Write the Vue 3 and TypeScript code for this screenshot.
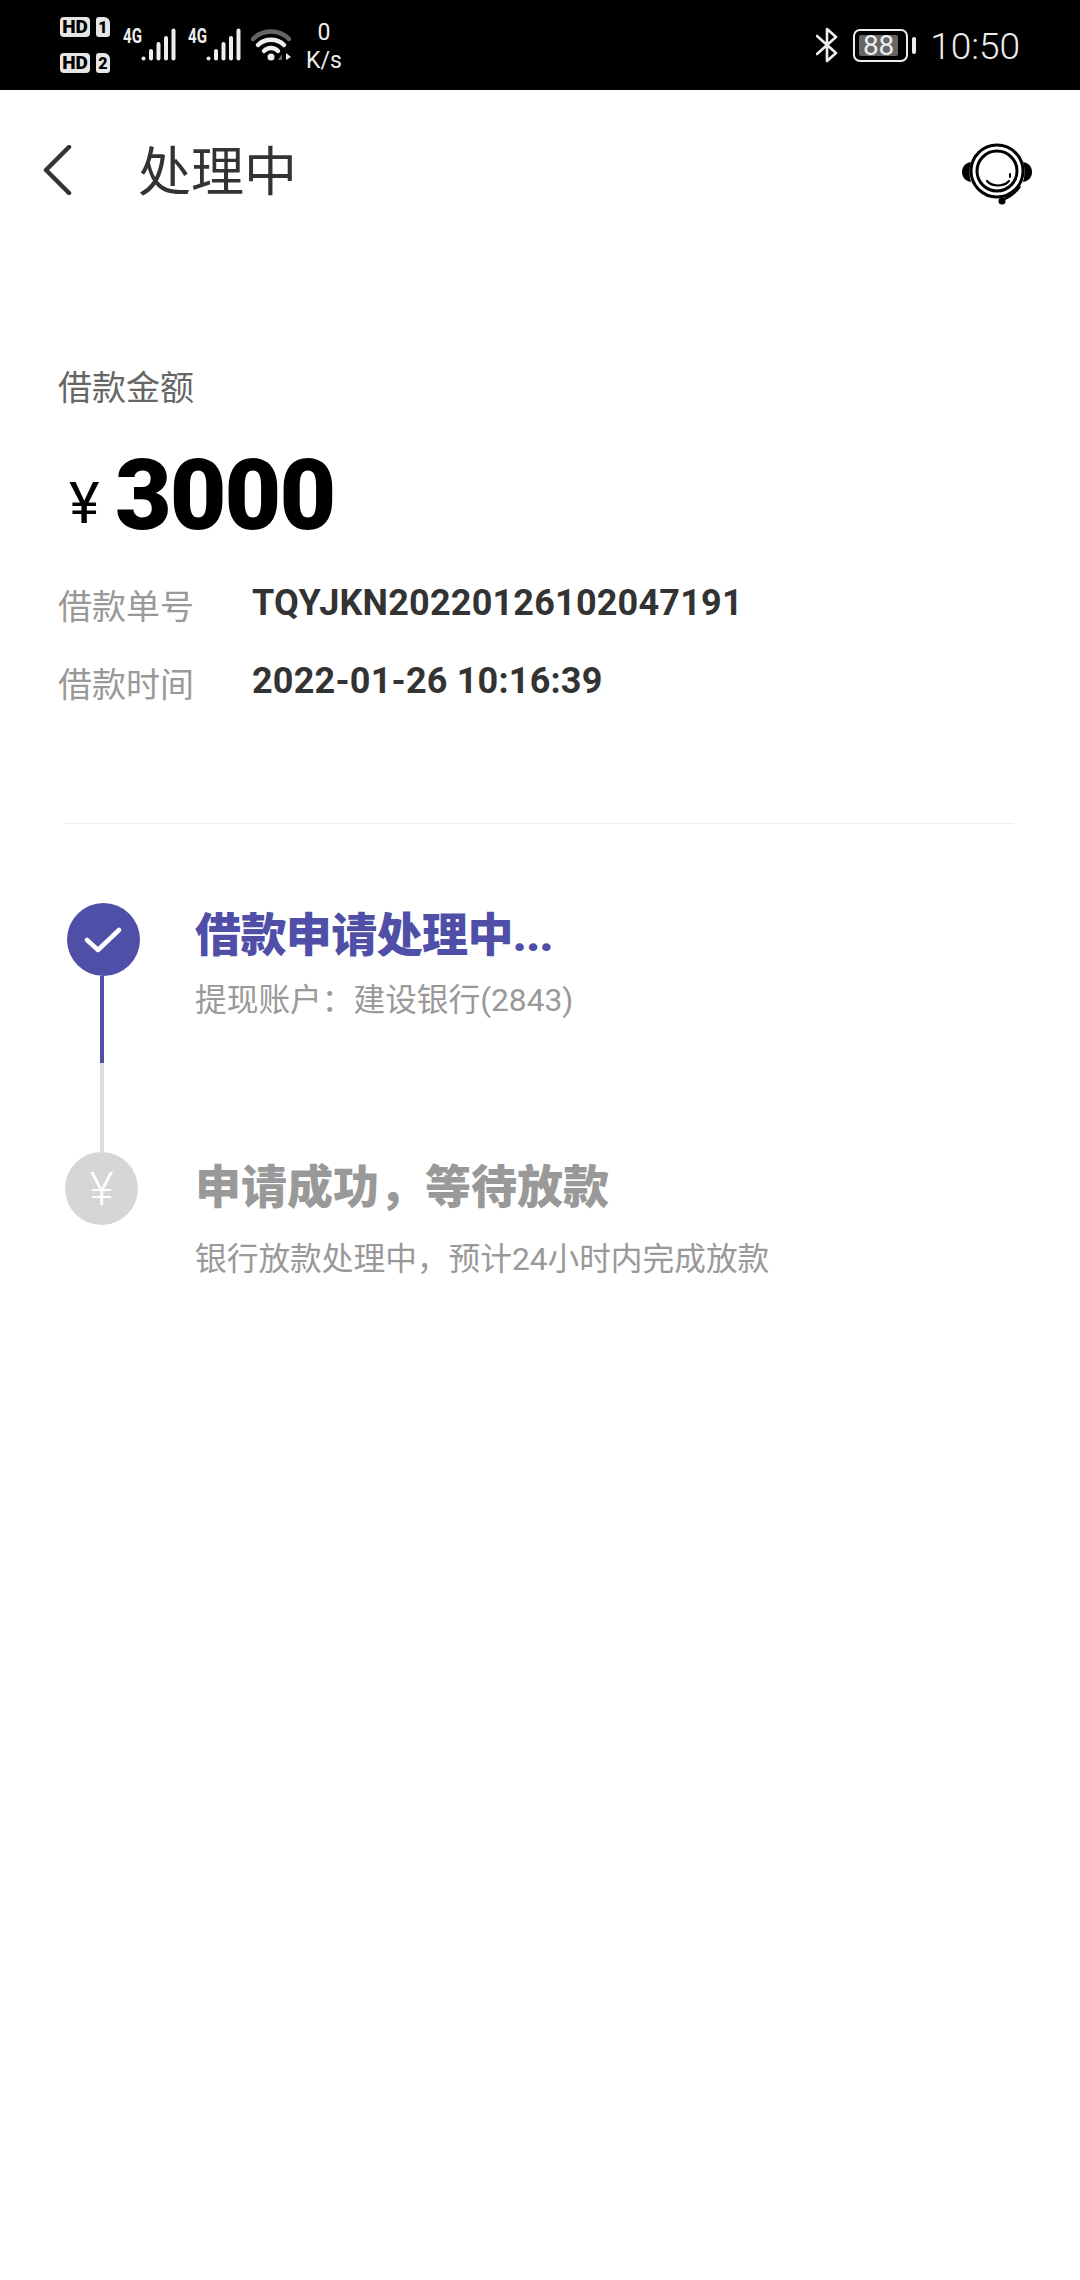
<template>
  <div class="page">
    <!-- status bar -->
    <div class="status-bar">
      <div class="status-left">
        <div class="sim-col">
          <div class="sim-row" v-for="n in [1, 2]" :key="n">
            <span class="hd">HD</span>
            <span class="sim">{{ n }}</span>
          </div>
        </div>
        <div class="signal" v-for="n in 2" :key="n">
          <span class="net">4G</span>
          <svg width="35" height="33" viewBox="0 0 35 33">
            <g stroke="#eee" stroke-width="4" stroke-linecap="round">
              <path d="M2.500 30.500V30.600" />
              <path d="M10 23V30.500" />
              <path d="M17.500 16V30.500" />
              <path d="M25 10V30.500" />
              <path d="M32.500 2.500V30.500" />
            </g>
          </svg>
        </div>
        <svg class="wifi" width="40" height="33" viewBox="0 0 40 33">
          <path d="M2 11C12 1 28 1 38 11" fill="none" stroke="#666" stroke-width="4.500" stroke-linecap="round" />
          <path d="M7 17C14 10 26 10 33 17" fill="none" stroke="#eee" stroke-width="4.500" stroke-linecap="round" />
          <path d="M13 23C17 19 23 19 27 23" fill="none" stroke="#eee" stroke-width="4.500" stroke-linecap="round" />
          <circle cx="20" cy="29" r="3.500" fill="#eee" />
          <path d="M31 26V32H27Z" fill="#666" />
          <path d="M35 25L40 29L35 32Z" fill="#eee" />
        </svg>
        <div class="speed">
          <span>0</span>
          <span>K/s</span>
        </div>
      </div>
      <div class="status-right">
        <svg class="bt" width="22" height="36" viewBox="0 0 22 36">
          <path d="M1 9L20 26L11 34V2L20 10L1 27" fill="none" stroke="#eee" stroke-width="2.600" stroke-linecap="round" stroke-linejoin="round" />
        </svg>
        <div class="battery">
          <div class="battery-fill">88</div>
        </div>
        <div class="battery-nub"></div>
        <span class="time">10:50</span>
      </div>
    </div>

    <!-- nav -->
    <div class="nav">
      <svg class="back" width="30" height="50" viewBox="0 0 30 50">
        <path d="M26 2L3 25L26 48" fill="none" stroke="#333" stroke-width="4.500" stroke-linecap="round" stroke-linejoin="round" />
      </svg>
      <div class="nav-title">处理中</div>
      <svg class="headset" width="72" height="66" viewBox="0 0 72 66">
        <path d="M10 20C4 21 1 25 1 30C1 35 4 39 10 40C8 33 8 27 10 20Z" fill="#000" />
        <path d="M62 20C68 21 71 25 71 30C71 35 68 39 62 40C64 33 64 27 62 20Z" fill="#000" />
        <circle cx="36" cy="29" r="26" fill="none" stroke="#000" stroke-width="3" />
        <circle cx="36" cy="29" r="20" fill="none" stroke="#000" stroke-width="3" />
        <path d="M26 39C31 45 43 45 48 39" fill="none" stroke="#000" stroke-width="2.200" stroke-linecap="round" />
        <path d="M49 32V35" stroke="#000" stroke-width="2" stroke-linecap="round" />
        <path d="M59 44C54 52 47 56 41 58" fill="none" stroke="#000" stroke-width="2.500" />
        <circle cx="41" cy="59" r="3.500" fill="#000" />
      </svg>
    </div>

    <!-- amount -->
    <div class="summary">
      <div class="label">借款金额</div>
      <div class="amount">
        <span class="currency">¥</span><span class="value">3000</span>
      </div>
      <div class="info-row" v-for="row in infoRows" :key="row.label">
        <span class="info-label">{{ row.label }}</span>
        <span class="info-value">{{ row.value }}</span>
      </div>
    </div>

    <div class="divider"></div>

    <!-- steps -->
    <div class="steps">
      <div class="step step-active">
        <div class="rail">
          <div class="dot dot-active">
            <svg width="38" height="30" viewBox="0 0 38 30">
              <path d="M3 15L14 25L35 5" fill="none" stroke="#fff" stroke-width="4.500" stroke-linecap="round" stroke-linejoin="round" />
            </svg>
          </div>
          <div class="line line-active"></div>
          <div class="line line-idle"></div>
        </div>
        <div class="step-body">
          <div class="step-title">借款申请处理中...</div>
          <div class="step-sub">提现账户：建设银行(2843)</div>
        </div>
      </div>
      <div class="step step-idle">
        <div class="rail">
          <div class="dot dot-idle">¥</div>
        </div>
        <div class="step-body">
          <div class="step-title">申请成功，等待放款</div>
          <div class="step-sub">银行放款处理中，预计24小时内完成放款</div>
        </div>
      </div>
    </div>
  </div>
</template>

<script setup lang="ts">
const infoRows = [
  { label: '借款单号', value: 'TQYJKN20220126102047191' },
  { label: '借款时间', value: '2022-01-26 10:16:39' },
]
</script>

<style scoped>
.page {
  width: 1080px;
  height: 2280px;
  background: #fff;
  overflow: hidden;
  font-family: Roboto, "Noto Sans CJK SC", sans-serif;
}

.status-bar {
  height: 90px;
  background: #000;
  color: #eee;
  display: flex;
  justify-content: space-between;
}
.status-left {
  display: flex;
  padding-left: 60px;
}
.sim-col {
  display: flex;
  flex-direction: column;
  gap: 16px;
  padding-top: 17px;
  width: 63px;
}
.sim-row {
  display: flex;
  gap: 6px;
}
.hd {
  width: 30px;
  height: 20px;
  background: #e6e6e6;
  color: #000;
  border-radius: 4px;
  font-size: 19px;
  font-weight: 900;
  line-height: 20px;
  text-align: center;
}
.sim {
  width: 14px;
  height: 20px;
  background: #e6e6e6;
  color: #000;
  border-radius: 3px 6px 3px 3px;
  font-size: 16px;
  font-weight: 900;
  line-height: 21px;
  text-align: center;
}
.signal {
  display: flex;
  width: 65px;
  padding-top: 28px;
  align-items: flex-start;
}
.net {
  width: 18px;
  font-size: 21px;
  font-weight: 700;
  line-height: 16px;
  transform: scaleX(0.72);
  transform-origin: left;
  white-space: nowrap;
}
.wifi {
  margin-top: 28px;
  margin-left: -2px;
}
.speed {
  display: flex;
  flex-direction: column;
  align-items: center;
  width: 36px;
  margin-left: 15px;
  padding-top: 21px;
  font-size: 23px;
  line-height: 24px;
  gap: 4px;
}
.status-right {
  display: flex;
  padding-right: 60px;
}
.bt {
  margin-top: 27px;
  margin-right: 15px;
}
.battery {
  width: 55px;
  height: 33px;
  margin-top: 29px;
  box-sizing: border-box;
  border: 2px solid #eee;
  border-radius: 7px;
  padding: 4px 8px 4px 4px;
}
.battery-fill {
  height: 21px;
  background: #666;
  border-radius: 2px;
  font-size: 28px;
  line-height: 22px;
  text-align: center;
}
.battery-nub {
  width: 4px;
  height: 17px;
  margin: 37px 14px 0 4px;
  background: #eee;
  border-radius: 2px;
}
.time {
  font-size: 37px;
  font-weight: 300;
  line-height: 93px;
}

.nav {
  height: 160px;
  display: flex;
  align-items: center;
  padding-left: 43px;
  padding-right: 47px;
}
.back {
  flex: none;
}
.nav-title {
  margin-left: 65px;
  margin-bottom: 4px;
  flex: 1;
  font-size: 53px;
  color: #333;
  font-weight: 400;
}
.headset {
  margin-top: 10px;
}

.summary {
  padding: 118px 0 0 58px;
}
.label {
  font-size: 34px;
  line-height: 40px;
  color: #666;
}
.amount {
  height: 100px;
  margin-top: 38px;
  margin-bottom: -3px;
  padding-left: 11px;
  line-height: 100px;
}
.currency {
  display: inline-block;
  width: 46px;
  font-size: 58px;
  font-weight: 400;
  color: #000;
  vertical-align: 6px;
  line-height: 40px;
}
.value {
  font-size: 98px;
  line-height: 100px;
  letter-spacing: -2px;
  font-weight: 900;
  color: #000;
}
.info-row {
  display: flex;
  height: 40px;
  line-height: 40px;
  margin-top: 38px;
}
.amount + .info-row {
  margin-top: 44px;
}
.info-label {
  width: 194px;
  font-size: 34px;
  color: #999;
}
.info-value {
  font-size: 36px;
  line-height: 32px;
  letter-spacing: 0.2px;
  font-weight: 700;
  color: #333;
}

.divider {
  height: 1px;
  margin: 118px 66px 0 64px;
  background: #eee;
}

.steps {
  padding: 79px 0 0 66px;
}
.step {
  display: flex;
}
.step-active {
  height: 249px;
}
.rail {
  width: 74px;
  display: flex;
  flex-direction: column;
  align-items: center;
  flex: none;
}
.dot {
  width: 73px;
  height: 73px;
  border-radius: 50%;
  display: flex;
  align-items: center;
  justify-content: center;
  flex: none;
}
.dot-active {
  background: #4f4fa8;
}
.dot-idle {
  background: #d6d6d6;
  color: #fff;
  font-size: 46px;
  font-weight: 300;
  margin-left: -3px;
}
.line {
  width: 4px;
  margin-right: 2px;
}
.line-active {
  height: 87px;
  background: #4f4fa8;
}
.line-idle {
  height: 89px;
  background: #ddd;
}
.step-body {
  margin-left: 55px;
}
.step-title {
  font-size: 46px;
  line-height: 50px;
  font-weight: 900;
}
.step-sub {
  font-size: 31.700px;
  line-height: 40px;
  color: #999;
}
.step-active .step-title {
  margin-top: 7px;
  color: #4f4fa8;
  letter-spacing: -0.600px;
}
.step-active .step-sub {
  margin-top: 21px;
}
.step-idle .step-title {
  margin-top: 10px;
  color: #999;
}
.step-idle .step-sub {
  margin-top: 28px;
}
</style>
